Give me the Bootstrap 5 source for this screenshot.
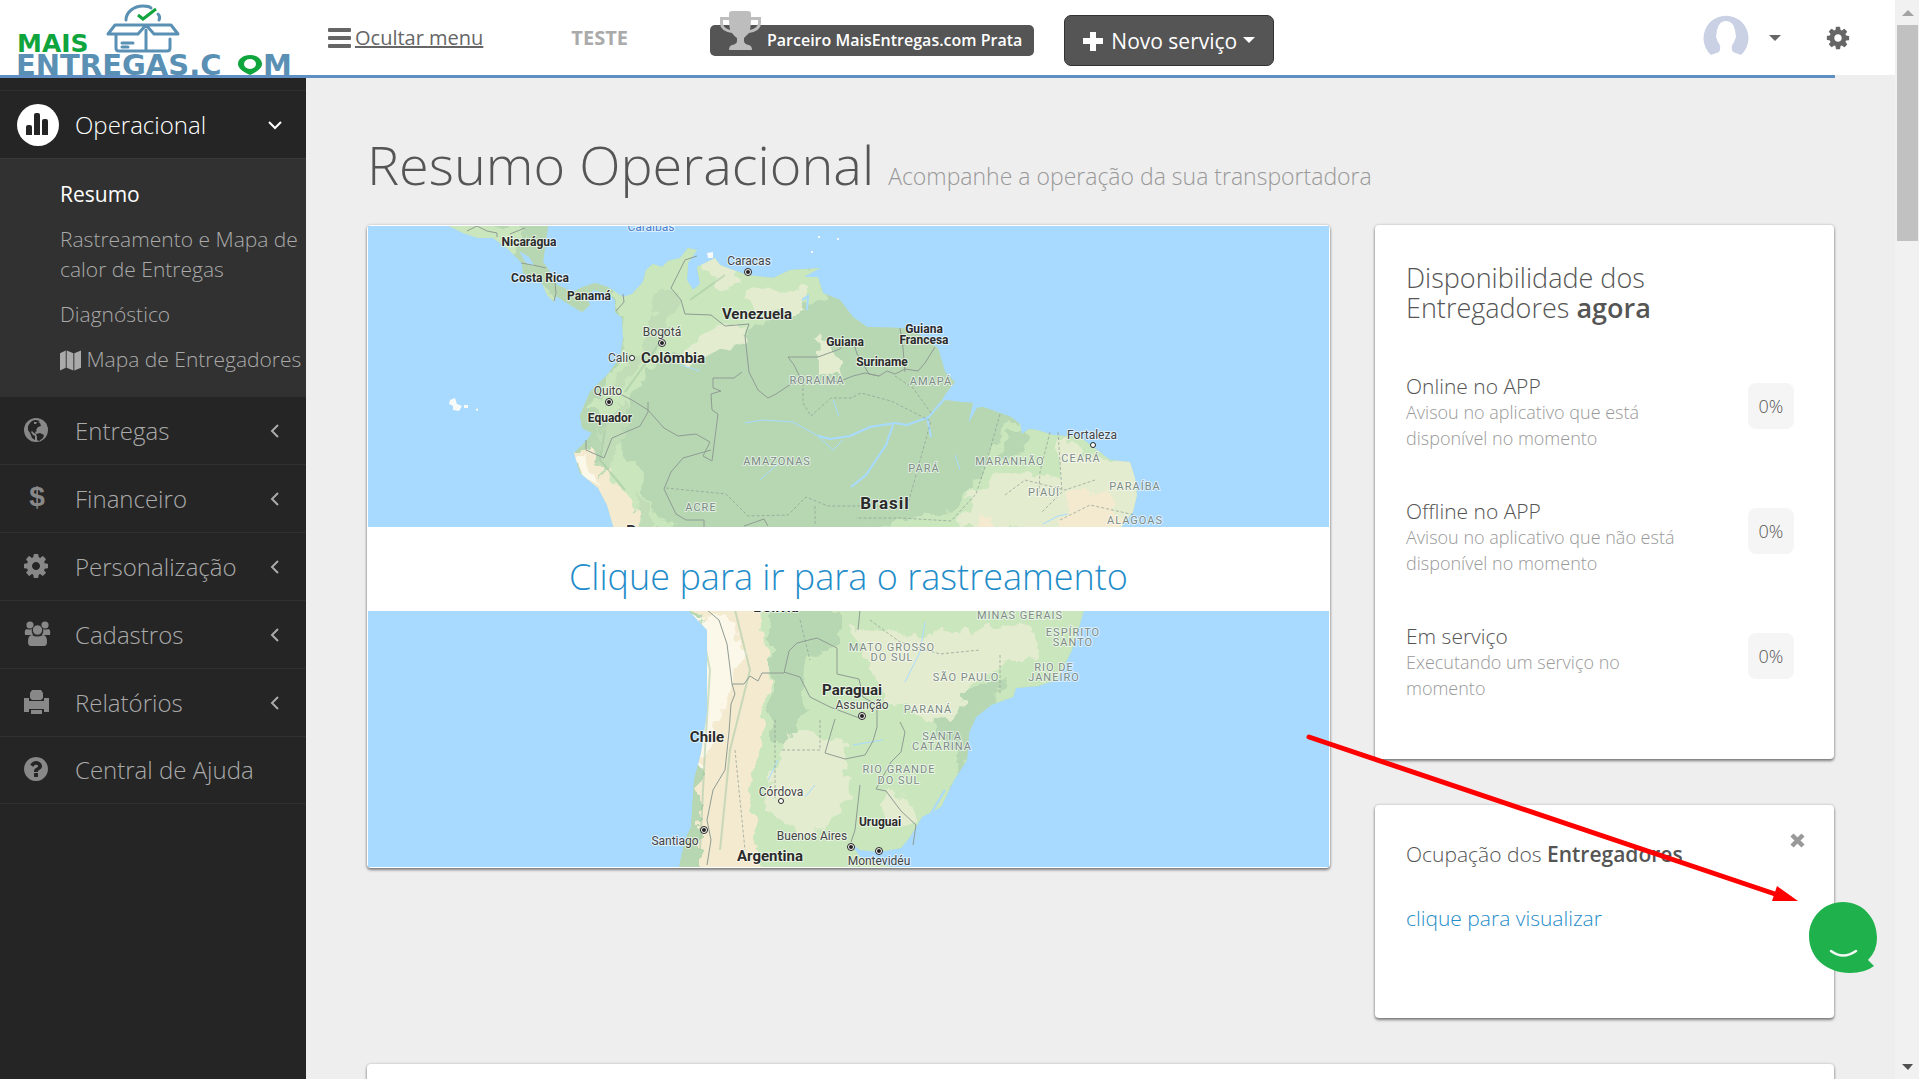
<!DOCTYPE html>
<html lang="pt-BR">
<head>
<meta charset="utf-8">
<meta name="viewport" content="width=device-width, initial-scale=1">
<title>MaisEntregas.com - Resumo Operacional</title>
<link href="https://cdn.jsdelivr.net/npm/bootstrap@5.3.0/dist/css/bootstrap.min.css" rel="stylesheet">
<style>
body{font-family:"Open Sans","Noto Sans",sans-serif;font-weight:300;font-size:21px;line-height:30px;color:#555;background:#eee;height:100vh;overflow:hidden}
a{text-decoration:none;color:#1f8dc9}
.shell,.content{min-width:0}
.lower{min-height:0}
.topbar{height:75px;background:#fff}
.brand{width:306px;flex:none}
.brand svg{display:block;overflow:visible}
.toggle-link{color:#666;font-weight:400;font-size:20px;margin-left:22px}
.toggle-link span{text-decoration:underline}
.company{margin-left:88px;font-size:20px;font-weight:700;color:#aaa}
.partner{background:#555;color:#fff;height:31px;border-radius:5px;margin:6px 0 0 82px;padding:0 12px 0 57px;font-weight:600;font-size:16px;line-height:31px}
.partner svg{position:absolute;left:8px;top:-15px}
.btn-new{background:#555;border:1px solid #333;color:#fff;font-size:21px;line-height:30px;height:51px;border-radius:7px;margin:6px 0 0 30px;padding:0 18px}
.btn-new svg{vertical-align:-2px}
.btn-new:hover{background:#444;color:#fff}
.account{margin-left:auto;margin-right:44px;gap:20px}
.iconbtn{background:none;border:0;padding:0;color:#666;line-height:1}
.accent{height:3px;background:#5f8fc2;margin-right:60px}
.side{width:306px;flex:none;background:#252525;padding-top:12px}
.side a{color:#aaa}
.menu-item{height:68px;border-top:1px solid #303030;font-size:24px;padding-right:23px}
.menu-item.last-item{border-bottom:1px solid #303030}
.menu-ico{width:75px;flex:none;padding:0 0 4px 24px;color:#888;line-height:1}
.menu-ico.round{padding:0 0 0 17px}
.side .menu-item.current{color:#fff}
.submenu{background:#313131;padding:13px 0 14px 60px;border-top:1px solid #3a3a3a}
.submenu a{display:block;padding:7px 0 8px}
.submenu .on{color:#fff;font-weight:400}
.content{padding:56px 61px 0}
.page-title{font-size:54px;line-height:60px;font-weight:300;margin:0 0 31px;color:#555}
.page-title small{font-size:23px;line-height:1;font-weight:300;color:#999}
.gutters{--bs-gutter-x:45px;--bs-gutter-y:46px}
.panel{background:#fff;border-radius:4px;box-shadow:0 2px 3px rgba(0,0,0,.45),0 0 3px rgba(0,0,0,.2)}
.mapcard{overflow:hidden;padding:1px;color:inherit;display:block}
.mapcard svg{display:block;width:100%;height:auto}
.band{position:absolute;left:0;right:0;top:47%;height:84px;background:#fff;color:#1f8dc9;font-size:36px;line-height:84px;text-align:center}
.stats{padding:38px 40px 58px 31px;margin-bottom:46px}
.stats h2{font-size:27px;line-height:30px;font-weight:300;margin:0 0 50px}
.stat{line-height:26px;margin-bottom:47px}
.stat:last-child{margin-bottom:0}
.stat p{font-size:18px;color:#999;margin:0;max-width:270px}
.pct{width:46px;height:46px;border-radius:8px;background:#f5f5f5;font-size:18px;line-height:46px;text-align:center;margin-top:10px;flex:none}
.occ{padding:34px 31px 85px}
.occ h2{font-size:21px;line-height:30px;font-weight:300;margin:0 0 34px}
.occ .iconbtn{position:absolute;right:29px;top:28px;color:#999}
.next-panel{height:120px}
b{font-weight:600}
.bar-track{width:24px;flex:none;background:#f1f1f1;padding:0 1px 0 2px}
.bar-thumb{height:216px;background:#c1c1c1}
.bar-track svg{display:block}
.arrow-over{position:absolute;right:115px;top:730px;pointer-events:none}
.chat{position:absolute;right:42px;top:902px}
.lbl{font-family:Roboto,sans-serif;text-anchor:middle;paint-order:stroke;stroke:#fff;stroke-opacity:.6;stroke-width:2px;stroke-linejoin:round}
.ct{font-weight:700;fill:#2b2b2b;font-size:12px}
.cb{font-weight:700;fill:#2b2b2b;font-size:15px}
.cbr{font-weight:700;fill:#2b2b2b;font-size:17px;letter-spacing:1px}
.cy{fill:#444;font-size:12px;font-weight:400}
.sea{fill:#4a80cc;font-size:12px;font-weight:400}
.st{fill:#7c8b86;font-size:11px;font-weight:400;letter-spacing:1px}
</style>
<script src="https://cdn.jsdelivr.net/npm/bootstrap@5.3.0/dist/js/bootstrap.bundle.min.js"></script>
</head>
<body class="d-flex position-relative">
<div class="shell d-flex flex-column flex-grow-1">
<header>
 <nav class="topbar d-flex align-items-center" aria-label="Barra superior">
  <a class="brand" href="#" aria-label="MaisEntregas.com">
   <svg width="306" height="75" viewBox="0 0 306 75">
    <g font-family="DejaVu Sans" font-weight="700"><text x="17" y="52" font-size="25" fill="#0fa53c">MAIS</text><text x="16" y="75" font-size="29" fill="#5a90b4">ENTREGAS.C</text><text x="263" y="75" font-size="29" fill="#5a90b4">M</text></g>
    <path fill="#0fa53c" fill-rule="evenodd" d="M250 55c7 0 12 4 12 9 0 4-5 8-12 11-7-3-12-7-12-11 0-5 5-9 12-9zm0 4a6 5 0 1 0 0 10 6 5 0 1 0 0-10z"/>
    <g fill="none" stroke="#5a90b4" stroke-width="3" stroke-linejoin="round" stroke-linecap="round"><path d="M126 20c0-8 8-14 17-14 4 0 7 1 8 2M158 14c2 2 2 4 1 6M115 25h56l7 9h-24l-8-9-8 9h-30zM116 36v12q0 3 3 3h48q3 0 3-3V39M146 30v20M122 43h11M122 47h6"/></g>
    <path d="M138 15l5 4 13-10" fill="none" stroke="#0fa53c" stroke-width="3"/>
   </svg>
  </a>
  <a href="#" class="toggle-link d-flex align-items-center"><svg class="me-1" width="23" height="20" fill="#666"><rect y="0" width="23" height="4" rx="1"/><rect y="8" width="23" height="4" rx="1"/><rect y="16" width="23" height="4" rx="1"/></svg><span>Ocultar menu</span></a>
  <span class="company">TESTE</span>
  <span class="partner position-relative text-nowrap"><svg width="44" height="41" viewBox="0 0 44 41"><path fill="#bdbdbd" fill-rule="evenodd" d="M14 1h16q3 0 3 3v3h10v6q0 8-12 10-3 3-5 5v3q0 3 5 4 3 1 3 5H11q0-4 3-5 5-1 5-4v-3q-3-2-5-5Q2 21 2 13V7h9V4q0-3 3-3zM5 10v3q0 5 7 7-1-5-1-10zm28 0q0 5-1 10 8-2 8-7v-3z"/></svg>Parceiro MaisEntregas.com Prata</span>
  <button type="button" class="btn btn-new dropdown-toggle text-nowrap" aria-haspopup="true"><svg class="me-2" width="20" height="20" viewBox="0 0 20 20"><path fill="#fff" d="M7 1h6v6h7v6h-7v7H7v-7H0V7h7z"/></svg>Novo serviço</button>
  <div class="account d-flex align-items-center">
   <button class="iconbtn d-flex align-items-center" type="button" aria-label="Conta"><svg width="46" height="46" viewBox="0 0 46 46"><path fill="#cad1e4" d="M8 40A22.500 22.500 0 1 1 38 40l-8-3q-3-5 1-10l2-5-1-7q-2-9-9-9t-9 9l-1 7 2 5q4 5 1 10z"/></svg><svg class="ms-3" width="16" height="6"><path fill="#666" d="M4 0h12l-6 6z"/></svg></button>
   <button class="iconbtn ms-4" type="button" aria-label="Configurações"><svg width="26" height="26" viewBox="0 0 1792 1792" fill="#666"><path id="cog" d="M1152 896q0-106-75-181t-181-75-181 75-75 181 75 181 181 75 181-75 75-181zm512-109v222q0 12-8 23t-20 13l-185 28q-19 54-39 91 35 50 107 138 10 12 10 25t-9 23q-27 37-99 108t-94 71q-12 0-26-9l-138-108q-44 23-91 38-16 136-29 186-7 28-36 28h-222q-14 0-24.500-8.500t-11.500-21.500l-28-184q-49-16-90-37l-141 107q-10 9-25 9-14 0-25-11-126-114-165-168-7-10-7-23 0-12 8-23 15-21 51-66.500t54-70.500q-27-50-41-99l-183-27q-13-2-21-12.500t-8-23.500v-222q0-12 8-23t19-13l186-28q14-46 39-92-40-57-107-138-10-12-10-24 0-10 9-23 26-36 98.500-107.500t94.500-71.500q13 0 26 10l138 107q44-23 91-38 16-136 29-186 7-28 36-28h222q14 0 24.500 8.500t11.500 21.500l28 184q49 16 90 37l142-107q9-9 24-9 13 0 25 10 129 119 165 170 7 8 7 22 0 12-8 23-15 21-51 66.500t-54 70.500q26 50 41 98l183 28q13 2 21 12.500t8 23.500z"/></svg></button>
  </div>
 </nav>
 <div class="accent"></div>
</header>
<div class="lower d-flex flex-grow-1">
<aside class="side">
 <a href="#" class="menu-item current d-flex align-items-center"><span class="menu-ico round"><svg width="42" height="42"><circle cx="21" cy="21" r="21" fill="#fff"/><path fill="#252525" d="M9 31v-8q0-2 2-2h2q2 0 2 2v8zM17 31V11q0-2 2-2h2q2 0 2 2v20zM25 31V17q0-2 2-2h2q2 0 2 2v14z"/></svg></span><span class="flex-grow-1">Operacional</span><svg width="16" height="12"><path d="M2 3l6 6 6-6" fill="none" stroke="#fff" stroke-width="2"/></svg></a>
 <nav class="submenu" aria-label="Operacional">
  <a class="on" href="#">Resumo</a>
  <a href="#">Rastreamento e Mapa de<br>calor de Entregas</a>
  <a href="#">Diagnóstico</a>
  <a href="#" class="text-nowrap"><svg width="21" height="22" viewBox="0 0 22 22"><path fill="#aaa" d="M0 3l6-3v18l-6 3zM7 0l7 3v18l-7-3zM15 3l7-3v18l-7 3z"/></svg> Mapa de Entregadores</a>
 </nav>
 <a href="#" class="menu-item d-flex align-items-center"><span class="menu-ico"><svg width="24" height="24" viewBox="0 0 24 24"><circle cx="12" cy="12" r="12" fill="#888"/><path fill="#252525" d="M6 5q2-3 6-3l4 1-2 1 2 1 1 3-3 1-2 3 1 1-2 1 1 2-2-1-2-2-1 1 2 3 2 1 0 4-3-2-2-5-2-3 0-4z"/><path fill="#252525" d="M12 16l4-1 4 2-1 3-4 3-2-1 0-3z"/><path fill="#888" d="M10 4l3 0-1 2-2 0z"/></svg></span><span class="flex-grow-1">Entregas</span><svg width="16" height="16"><path d="M11 2L5 8l6 6" fill="none" stroke="#aaa" stroke-width="2"/></svg></a>
 <a href="#" class="menu-item d-flex align-items-center"><span class="menu-ico"><svg width="24" height="36"><text x="13" y="27" text-anchor="middle" font-family="Liberation Sans" font-weight="700" font-size="28" fill="#888">$</text></svg></span><span class="flex-grow-1">Financeiro</span><svg width="16" height="16"><path d="M11 2L5 8l6 6" fill="none" stroke="#aaa" stroke-width="2"/></svg></a>
 <a href="#" class="menu-item d-flex align-items-center"><span class="menu-ico"><svg width="24" height="24" viewBox="128 128 1536 1536" fill="#888"><use href="#cog"/></svg></span><span class="flex-grow-1">Personalização</span><svg width="16" height="16"><path d="M11 2L5 8l6 6" fill="none" stroke="#aaa" stroke-width="2"/></svg></a>
 <a href="#" class="menu-item d-flex align-items-center"><span class="menu-ico"><svg width="27" height="25" viewBox="0 0 27 25" fill="#888"><circle cx="6" cy="4" r="3.600"/><circle cx="21" cy="4" r="3.600"/><path d="M1 14q-1-6 2-6 2 1 5 0-1 3 1 6H4zM26 14q1-6-2-6-2 1-5 0 1 3-1 6h5z"/><circle cx="13.500" cy="9" r="5.200" stroke="#252525"/><path d="M7 25q-3 0-3-4 0-7 4-7 5 3 11 0 4 0 4 7 0 4-3 4z"/></svg></span><span class="flex-grow-1">Cadastros</span><svg width="16" height="16"><path d="M11 2L5 8l6 6" fill="none" stroke="#aaa" stroke-width="2"/></svg></a>
 <a href="#" class="menu-item d-flex align-items-center"><span class="menu-ico"><svg width="25" height="24" viewBox="0 0 25 24" fill="#888"><path d="M8 0h9l2 3v5l-2 2H8L6 8V3zM0 8h5v3h15V8h5v14h-5v-3H5v3H0zM7 20h11v4H7z"/></svg></span><span class="flex-grow-1">Relatórios</span><svg width="16" height="16"><path d="M11 2L5 8l6 6" fill="none" stroke="#aaa" stroke-width="2"/></svg></a>
 <a href="#" class="menu-item last-item d-flex align-items-center"><span class="menu-ico"><svg width="24" height="24" viewBox="128 128 1536 1536" fill="#888"><path d="M1024 1376v-192q0-14-9-23t-23-9h-192q-14 0-23 9t-9 23v192q0 14 9 23t23 9h192q14 0 23-9t9-23zm256-672q0-88-55.500-163t-138.500-116-170-41q-243 0-371 213-15 24 8 42l132 100q7 6 19 6 16 0 25-12 53-68 86-92 34-24 86-24 48 0 85.500 26t37.500 59q0 38-20 61t-68 45q-63 28-115.500 86.500t-52.500 125.500v36q0 14 9 23t23 9h192q14 0 23-9t9-23q0-19 21.500-49.500t54.500-49.500q32-18 49-28.500t46-35 44.500-48 28-60.500 12.500-81zm384 192q0 209-103 385.500t-279.500 279.500-385.500 103-385.500-103-279.500-279.500-103-385.500 103-385.500 279.500-279.500 385.500-103 385.500 103 279.500 279.500 103 385.500z"/></svg></span><span class="flex-grow-1">Central de Ajuda</span></a>
</aside>
<main class="content flex-grow-1">
 <h1 class="page-title">Resumo Operacional <small>Acompanhe a operação da sua transportadora</small></h1>
 <div class="row gutters mt-0">
  <div class="col-8 mt-0">
   <a href="#" class="panel mapcard position-relative">
    <svg viewBox="368 226 961 641" role="img" aria-label="Mapa da América do Sul">
     <defs><clipPath id="land"><path d="M449 226L463 233 478 238 493 238 507 248 522 263 523 273 542 283 547 295 554 302 556 296 570 305 582 312 590 305 586 297 593 290 607 293 615 300 615 312 622 318 623 338 620 358 607 375 590 392 580 415 582 428 592 433 587 440 574 453 580 473 598 488 607 505 613 526 640 570 688 610 707 630 707 663 707 713 701 753 694 780 691 827 685 840 679 867H891L860 857 850 842 860 850 879 852 901 848 910 837 922 817 941 807 954 780 967 760 969 733 976 717 991 705 1013 697 1016 688 1038 686 1057 680 1072 650 1079 627 1084 610 1090 570 1122 526 1133 512 1137 495 1135 478 1130 462 1110 460 1097 450 1080 437 1053 435 1037 430 1029 429 1022 434 1020 424 1011 417 1000 413 983 407 977 408 968 424 973 403 960 402 945 400 935 412 946 393 955 382 945 372 938 348 920 335 903 328 867 327 853 317 840 300 823 293 818 277 804 277 820 268 790 270 773 278 748 275 733 270 720 265 715 258 697 267 700 284 693 290 687 280 688 263 697 250 688 248 680 258 668 261 662 267 653 264 646 270 643 282 632 294 623 297 608 287 595 283 583 287 573 292 557 285 547 267 543 262 548 226z"/></clipPath>
     <filter id="rough" x="0" y="0" width="1" height="1"><feTurbulence type="fractalNoise" baseFrequency=".06" numOctaves="3" seed="4"/><feDisplacementMap in="SourceGraphic" scale="22" xChannelSelector="R" yChannelSelector="G"/></filter></defs>
     <path fill="#a8daff" d="M368 226h961v641H368z"/>
     <g clip-path="url(#land)">
      <path fill="#b7d7b3" d="M368 226h961v641H368z"/>
      <g filter="url(#rough)">
       <path fill="#b7d7b3" d="M368 226h961v641H368z"/>
       <path fill="#c9e6bd" d="M440 226h85l-15 40 40 30 30 15-60 5-60-50zM640 265l50-25 130 30 5 30-50 15-60 35-60 10-30 45-35 10 35-60-5-50-15-15zM1005 420l60 0 80 40 0 160-100 110-100 0-60-60-60-60 0-70 80-20 50-10 40-60zM750 600h60l90 60 90 0-30 110-30 100H740zM600 440l30 10 20 60 30 20h-80z"/>
       <path fill="#b7d7b3" d="M960 690l45-10-15 30-20 50-20-10-20-30zM770 610l70 0 0 30-30 20-15 90-25-10zM1010 430l15 0-5 25-25 5z"/>
       <path fill="#e4ecd0" d="M1060 440l45 20 40 0-10 70-100 10-50-30 10-40 60 10zM700 262l30-5 10 25-20 10zM745 292l60-5 0 25-50 0zM700 335l50-15-10 25-60 20zM818 335l12 10 10 30-20-5zM970 490l30 0 10 40-50 0zM850 625l60 10 120-10 10 30-60 20-30 50-60-20zM790 730l55 10 5 60-40 40-50-30zM890 790l30 30-20 10-20-20z"/>
       <path fill="#f3ead0" d="M570 450l20 0 40 50 20 40-40 10zM680 600l80 5 10 60-10 70-10 60 10 80h-60l0-260zM1070 490l40 5 10 30-60 20zM975 515l20 0 0 20-20 0z"/>
       <path fill="#fbf8ea" d="M695 620l30-10 20 40-15 40-30 80-10-40zM572 455l12 0 15 30-15-5z"/>
       <path fill="#c1ddb8" d="M660 290l20 10-30 60-50 45 40-55zM600 430l20-30 10 20-30 60zM640 490l15 40-20 0z"/>
      </g>
      <g fill="none" stroke="#9fc59f" stroke-opacity=".5" stroke-width="2"><path d="M625 392l25-35 20-30M605 430l-5 30 25 30M700 620l10 50-5 80-5 100M735 610l15 60-20 80-10 100M690 300l35-25"/></g>
      <g fill="none" stroke="#a8daff" stroke-width="1"><path d="M745 423l18-3 30 2 25 14 15 14 10-10M833 400l6 16M760 480l20-18M680 365l20 6M955 455l5 15M1043 524l15-8 10-2M925 622l-5 30-15 30M853 745l30-5M768 780l10-20M815 785l-10 12"/><path stroke-width="2" d="M818 436l12 3 20-3 20-9 25-4 12 2 22-8 12-15M927 417l4 20M893 425l-7 20-20 30-15 12M945 790l-15 25M802 300l6-4-1 14"/></g>
     </g>
     <g fill="none" stroke="#8f9c93" stroke-width="1">
      <path d="M467 231l10-5 10 5 10 2 0 4M510 234l15-6M521 263l12 2 13 3M555 283l1 10-2 8M623 294l1 8-8 9M697 256l-12 4-7 14-7 14 10 12 4 14 26 1 14 11 24-2-4 12 2 18 2 18 9 18 10 8 8-4 15-10 10-5-7-14-6-8 30 0 22-8 6-8M742 372l-8 6-21 0 0 10 8 3-10 3 1 16 6 4-6 47-9-5 7-14-14-8-18 2-14-8-16-18-16-10-12-6-8 0M648 402l0 10-8 14-28 12-8 20-18-8 0-10M711 450l-28 8-12 14-7 17 12 25 10 6 18 0 0 8M744 526l20-7 4 7M853 340l4 14 12 20 10 2 8-5 8 3 10-5 13 2 7-8 10-16M828 380l10 2 15-6 12-3 14 3M900 328l3 20 2 24M707 610l12 10 8 24 5 40 12 0 6-8 8 5 4-8 22 0 5-22 8-8 20-5 20 10 0 26 22 5 4 18 14 8 0 22-4 14-8 14-20 4-20-6 10-34M732 684l3 10-4 10-2 28-4 38-12 20-6 30 4 20-4 25M784 672l16 5 10 20 20 10 32 12M900 722l5 10-4 20-10 10-15 27 10 2 15 20 15 14-3 20M860 785l-5 45-4 12M840 600l20 10-2 20"/>
      <g stroke-dasharray="3 2" opacity=".7"><path d="M666 488l60 6 22 22 40-1 18-18 22 9 50 0M815 506v20M803 378v25l8 13 20-18 20 0 10-5 30 8 40 20-25 90M1000 414l-14 50-10 30-25 27-50-3-45 0M1050 432l-10 40-1 20M1058 432l4 60-20 20M895 376l18 12 18 25M870 620l30 22 40 12 40-4M820 720l0 30-40 0M1005 495l20-15 40 10 30-10M1060 520l30-15 45 10M800 620l10 40M775 720v80M735 750l10 100M1000 655l0 40"/></g>
     </g>
     <g fill="#f7faf7"><path d="M450 400l5-2 2 6 5 2-3 5-6-1 0-4-4-2zM464 405l4 0 0 3-4 0zM475 410l3-2 0 3zM707 253l6-1 0 6-5 0zM818 236h2v2h-2zM837 238h2v2h-2zM811 251h2v2h-2z"/></g>
     <path fill="#a8daff" d="M519 251l10 6 5 8-8-2z"/>
     <g fill="#fff" stroke="#222" stroke-width="1"><circle cx="748" cy="272" r="3.500"/><circle cx="662" cy="343" r="3.500"/><circle cx="609" cy="402" r="3.500"/><circle cx="862" cy="716" r="3.500"/><circle cx="704" cy="830" r="3.500"/><circle cx="851" cy="847" r="3.500"/><circle cx="879" cy="851" r="3.500"/><circle cx="632" cy="358" r="2.500"/><circle cx="1093" cy="445" r="2.500"/><circle cx="781" cy="801" r="2.500"/></g>
     <g fill="#222"><circle cx="748" cy="272" r="2"/><circle cx="662" cy="343" r="2"/><circle cx="609" cy="402" r="2"/><circle cx="862" cy="716" r="2"/><circle cx="704" cy="830" r="2"/><circle cx="851" cy="847" r="2"/><circle cx="879" cy="851" r="2"/></g>
     <g class="lbl ct"><text x="529" y="246">Nicarágua</text><text x="540" y="282">Costa Rica</text><text x="589" y="300">Panamá</text><text x="610" y="422">Equador</text><text x="845" y="346">Guiana</text><text x="924" y="333">Guiana</text><text x="924" y="344">Francesa</text><text x="882" y="366">Suriname</text><text x="880" y="826">Uruguai</text></g>
     <g class="lbl cb"><text x="757" y="319">Venezuela</text><text x="673" y="363">Colômbia</text><text x="642" y="536">Peru</text><text x="776" y="612">Bolívia</text><text x="852" y="695">Paraguai</text><text x="707" y="742">Chile</text><text x="770" y="861">Argentina</text></g>
     <g class="lbl cbr"><text x="885" y="509">Brasil</text></g>
     <g class="lbl sea"><text x="651" y="231">Caraíbas</text></g>
     <g class="lbl cy"><text x="749" y="265">Caracas</text><text x="662" y="336">Bogotá</text><text x="618" y="362">Cali</text><text x="608" y="395">Quito</text><text x="1092" y="439">Fortaleza</text><text x="862" y="709">Assunção</text><text x="781" y="796">Córdova</text><text x="812" y="840">Buenos Aires</text><text x="879" y="865">Montevidéu</text><text x="675" y="845">Santiago</text></g>
     <g class="lbl st"><text x="817" y="384">RORAIMA</text><text x="777" y="465">AMAZONAS</text><text x="701" y="511">ACRE</text><text x="931" y="385">AMAPÁ</text><text x="924" y="472">PARÁ</text><text x="1010" y="465">MARANHÃO</text><text x="1081" y="462">CEARÁ</text><text x="1044" y="496">PIAUÍ</text><text x="1135" y="490">PARAÍBA</text><text x="1135" y="524">ALAGOAS</text><text x="1020" y="619">MINAS GERAIS</text><text x="1073" y="636">ESPÍRITO</text><text x="1073" y="646">SANTO</text><text x="892" y="651">MATO GROSSO</text><text x="892" y="661">DO SUL</text><text x="966" y="681">SÃO PAULO</text><text x="1054" y="671">RIO DE</text><text x="1054" y="681">JANEIRO</text><text x="928" y="713">PARANÁ</text><text x="942" y="740">SANTA</text><text x="942" y="750">CATARINA</text><text x="899" y="773">RIO GRANDE</text><text x="899" y="784">DO SUL</text></g>
    </svg>
    <span class="band pt-2">Clique para ir para o rastreamento</span>
   </a>
  </div>
  <div class="col-4 mt-0">
   <section class="panel stats">
    <h2>Disponibilidade dos<br>Entregadores <b>agora</b></h2>
    <div class="stat d-flex justify-content-between"><div>Online no APP<p>Avisou no aplicativo que está disponível no momento</p></div><span class="pct">0%</span></div>
    <div class="stat d-flex justify-content-between"><div>Offline no APP<p>Avisou no aplicativo que não está disponível no momento</p></div><span class="pct">0%</span></div>
    <div class="stat d-flex justify-content-between"><div>Em serviço<p>Executando um serviço no momento</p></div><span class="pct">0%</span></div>
   </section>
   <section class="panel occ position-relative">
    <h2>Ocupação dos <b>Entregadores</b></h2>
    <a href="#">clique para visualizar</a>
    <button class="iconbtn d-flex" type="button" aria-label="Fechar"><svg width="15" height="15" viewBox="0 0 15 15"><path d="M2 2l11 11M13 2L2 13" stroke="#999" stroke-width="4.500"/></svg></button>
   </section>
  </div>
  <div class="col-12"><section class="panel next-panel"></section></div>
 </div>
</main>
</div>
</div>
<div class="bar-track d-flex flex-column" aria-hidden="true">
 <svg width="21" height="25"><path fill="#a3a3a3" d="M5 16l6-6 6 6z"/></svg><div class="bar-thumb"></div><svg class="mt-auto" width="21" height="25"><path fill="#505050" d="M5 10h11l-5 6z"/></svg>
</div>
<svg class="arrow-over" width="500" height="180" viewBox="1304 730 500 180" aria-hidden="true"><path d="M1309 737L1778 895" stroke="#f00" stroke-width="5" stroke-linecap="round"/><path fill="#f00" d="M1798 901l-21-15-5 15z"/></svg>
<button class="iconbtn chat" type="button" aria-label="Abrir chat"><svg width="68" height="72" viewBox="1808 902 68 72"><path fill="#1eb14c" d="M1842 902c19 0 34 15 34 36q0 13-9 22l6 6q-9 7-24 7c-23 0-41-15-41-37 0-19 15-34 34-34z"/><path d="M1830 951q12 9 25 0" fill="none" stroke="#f3f8f3" stroke-width="2.500" stroke-linecap="round"/></svg></button>
</body>
</html>
